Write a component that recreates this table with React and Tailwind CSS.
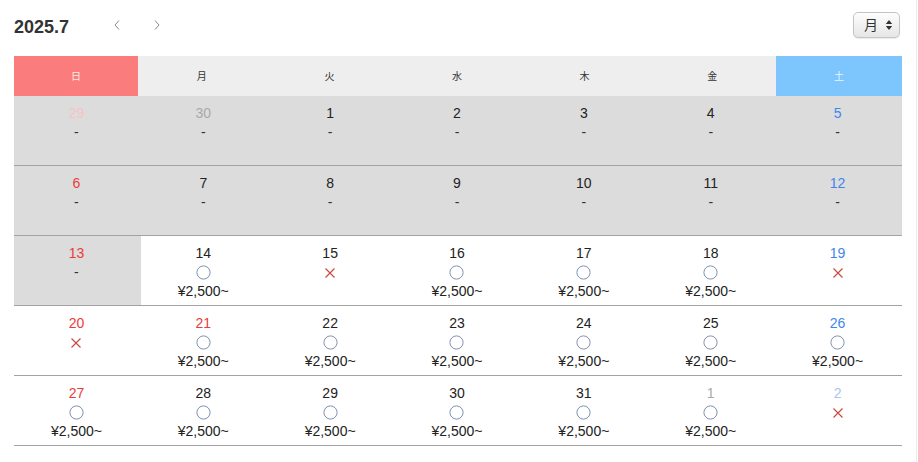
import React from "react";

const FONT = { fontFamily: '"Liberation Sans", Arial, "Noto Sans CJK JP", sans-serif' };

const Circle = () => (
  <svg width="15" height="15" viewBox="0 0 15 15" className="block">
    <circle cx="7.5" cy="7.5" r="6.6" fill="none" stroke="#7086a8" strokeWidth="0.9" />
  </svg>
);
const Cross = () => (
  <svg width="14" height="14" viewBox="0 0 14 14" className="block">
    <path d="M2.5 2.5 L11.5 11.5 M11.5 2.5 L2.5 11.5" stroke="#c8463a" strokeWidth="1.1" fill="none" />
  </svg>
);

const weeks = [
  [
    { d: 29, c: "text-[#f6c4c4]", t: "past" },
    { d: 30, c: "text-[#a9a9a9]", t: "past" },
    { d: 1, t: "past" },
    { d: 2, t: "past" },
    { d: 3, t: "past" },
    { d: 4, t: "past" },
    { d: 5, c: "text-[#3f86ef]", t: "past" },
  ],
  [
    { d: 6, c: "text-[#ec3b3b]", t: "past" },
    { d: 7, t: "past" },
    { d: 8, t: "past" },
    { d: 9, t: "past" },
    { d: 10, t: "past" },
    { d: 11, t: "past" },
    { d: 12, c: "text-[#3f86ef]", t: "past" },
  ],
  [
    { d: 13, c: "text-[#ec3b3b]", t: "past" },
    { d: 14, t: "o" },
    { d: 15, t: "x" },
    { d: 16, t: "o" },
    { d: 17, t: "o" },
    { d: 18, t: "o" },
    { d: 19, c: "text-[#3f86ef]", t: "x" },
  ],
  [
    { d: 20, c: "text-[#ec3b3b]", t: "x" },
    { d: 21, c: "text-[#ec3b3b]", t: "o" },
    { d: 22, t: "o" },
    { d: 23, t: "o" },
    { d: 24, t: "o" },
    { d: 25, t: "o" },
    { d: 26, c: "text-[#3f86ef]", t: "o" },
  ],
  [
    { d: 27, c: "text-[#ec3b3b]", t: "o" },
    { d: 28, t: "o" },
    { d: 29, t: "o" },
    { d: 30, t: "o" },
    { d: 31, t: "o" },
    { d: 1, c: "text-[#a9a9a9]", t: "o" },
    { d: 2, c: "text-[#a8c6ee]", t: "x" },
  ],
];

const heads = ["日", "月", "火", "水", "木", "金", "土"];

export default function App() {
  return (
    <div className="w-[918px] h-[462px] bg-white relative overflow-hidden" style={FONT}>
      <div className="absolute right-[1px] top-0 bottom-0 w-px bg-[#ececec]" />
      <div className="pl-[14px] w-[902px]">
        <div className="h-[56px] flex items-center">
          <div className="text-[18px] font-bold text-[#333] leading-none mt-[-2px] w-[90px]">2025.7</div>
          <div className="flex items-center gap-[26px] ml-[6px] mt-[-7px]">
            <svg width="14" height="14" viewBox="0 0 14 14">
              <path d="M9 2.5 L5 7 L9 11.5" stroke="#8a8a8a" strokeWidth="1" fill="none" />
            </svg>
            <svg width="14" height="14" viewBox="0 0 14 14">
              <path d="M5 2.5 L9 7 L5 11.5" stroke="#8a8a8a" strokeWidth="1" fill="none" />
            </svg>
          </div>
          <div className="ml-auto mr-[2px] mt-[-6px] w-[47px] h-[26px] rounded-[5px] border border-[#c4c4c4] bg-gradient-to-b from-[#fdfdfd] to-[#e6e6e6] shadow-[0_1px_1px_rgba(0,0,0,0.08)] flex items-center pl-[10px] pr-[6px]">
            <span className="text-[14px] text-[#333] leading-none">月</span>
            <svg width="8" height="12" viewBox="0 0 8 12" className="ml-auto">
              <path d="M4 1 L7.2 5 L0.8 5 Z M4 11 L7.2 7 L0.8 7 Z" fill="#333" />
            </svg>
          </div>
        </div>
        <div className="grid grid-cols-[124px_repeat(5,1fr)_126px] h-[40px]">
          {heads.map((h, i) => (
            <div
              key={h}
              className={`flex items-center justify-center text-[10px] ${
                i === 0 ? "bg-[#fa7c7c] text-[#fde8e8]" : i === 6 ? "bg-[#7cc5fd] text-[#e8f5ff]" : "bg-[#eeeeee] text-[#333]"
              }`}
            >
              {h}
            </div>
          ))}
        </div>
        {weeks.map((w, wi) => (
          <div key={wi} className="grid grid-cols-7 h-[70px] border-b border-[#a3a3a3]">
            {w.map((c, ci) => (
              <div
                key={ci}
                className={`flex flex-col items-center pt-[8px] pr-[2px] text-[14px] leading-[19px] ${
                  c.t === "past" ? "bg-[#dcdcdc]" : "bg-white"
                }`}
              >
                <div className={c.c || "text-[#222]"}>{c.d}</div>
                {c.t === "past" && <div className="text-[#333]">-</div>}
                {c.t === "o" && (
                  <>
                    <div className="h-[19px] flex items-center"><Circle /></div>
                    <div className="text-[#222]">¥2,500~</div>
                  </>
                )}
                {c.t === "x" && (
                  <div className="h-[19px] flex items-center"><Cross /></div>
                )}
              </div>
            ))}
          </div>
        ))}
      </div>
    </div>
  );
}
